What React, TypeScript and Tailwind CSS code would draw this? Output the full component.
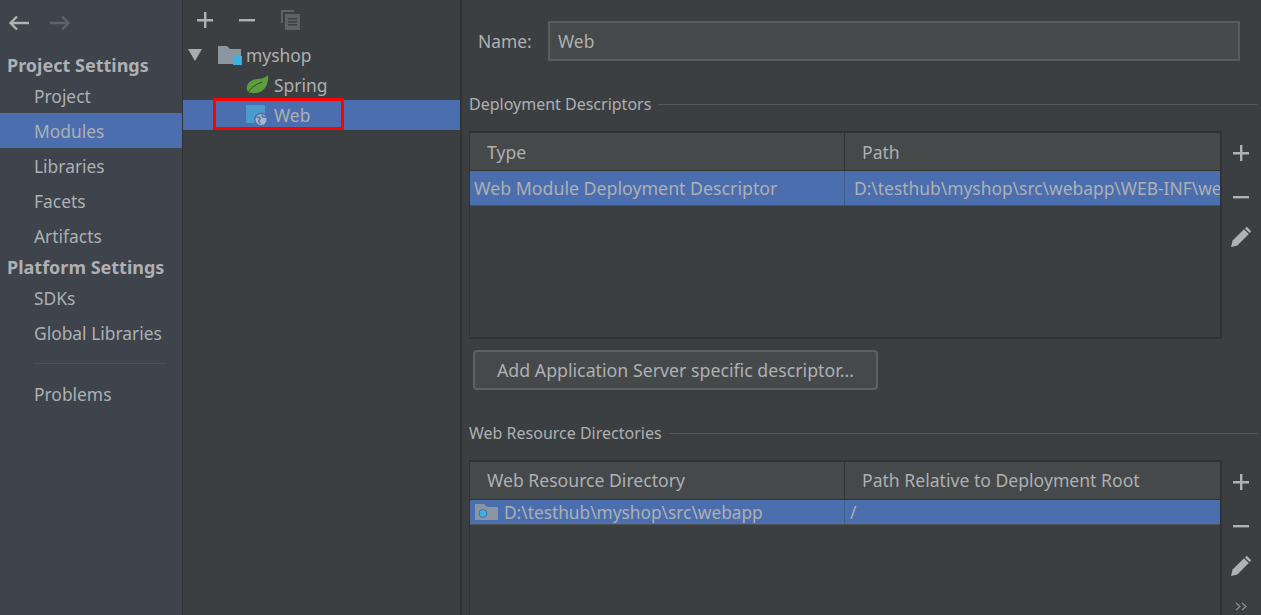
const font = "font-['Noto_Sans','Open_Sans',sans-serif]";

function Plus() {
  return (
    <svg width="16" height="16" viewBox="0 0 16 16" className="text-[#afb1b3]">
      <path d="M7 0h2.4v7H16v2.4H9.4V16H7V9.4H0V7h7z" fill="currentColor" />
    </svg>
  );
}

function Minus() {
  return (
    <svg width="16" height="16" viewBox="0 0 16 16" className="text-[#afb1b3]">
      <rect x="0" y="7" width="16" height="2.4" fill="currentColor" />
    </svg>
  );
}

function Pencil() {
  return (
    <svg width="22" height="22" viewBox="0 0 22 22" className="text-[#afb1b3]">
      <path d="M1 21l1.6-6.4L14 3.2l4.8 4.8L7.4 19.4z" fill="currentColor" />
      <path d="M15.6 1.8l1.2-1 4.4 4.4-1 1.4a1 1 0 0 1-1.2 0l-3.4-3.4a1 1 0 0 1 0-1.4z" fill="currentColor" />
    </svg>
  );
}

function SideTools({ more }: { more?: boolean }) {
  return (
    <div className="w-[39px] shrink-0 border-l-2 border-[#323232] flex flex-col items-center pt-[14px]">
      <Plus />
      <div className="mt-[28px]"><Minus /></div>
      <div className="mt-[21px]"><Pencil /></div>
      {more && (
        <svg width="12" height="9" viewBox="0 0 12 9" fill="none" stroke="#8c8e90" strokeWidth="1.3" className="mt-[25px]">
          <path d="M1 1l4 3.5L1 8M7 1l4 3.5L7 8" />
        </svg>
      )}
    </div>
  );
}

function SectionTitle({ text }: { text: string }) {
  return (
    <div className="flex items-center h-[24px] pl-[1px] pr-[3px] text-[16px] text-[#aeb0b2]">
      <span className="mr-[7px] whitespace-nowrap">{text}</span>
      <div className="flex-1 h-[1px] bg-[#55585a]" />
    </div>
  );
}

function SidebarItem({ text, active }: { text: string; active?: boolean }) {
  return (
    <div className={`h-[35px] pl-[34px] pt-[1px] flex items-center text-[17.4px] ${active ? "bg-[#4b6eaf]" : ""}`}>
      {text}
    </div>
  );
}

function Sidebar() {
  return (
    <div className="w-[182px] shrink-0 bg-[#3e434c] text-[#aeb0b2] border-r border-[#2f3133] box-content">
      <div className="h-[50px] flex items-start pt-[15px] pl-[8px] gap-[21px]">
        <svg width="21" height="16" viewBox="0 0 21 16" fill="none" stroke="#afb1b3" strokeWidth="2.4">
          <path d="M21 8H3M9 1.5L2.5 8 9 14.5" />
        </svg>
        <svg width="21" height="16" viewBox="0 0 21 16" fill="none" stroke="#5f6266" strokeWidth="2.4">
          <path d="M0 8h18M12 1.5L18.5 8 12 14.5" />
        </svg>
      </div>
      <div className="h-[31px] pl-[7px] flex items-center text-[18px] font-bold">Project Settings</div>
      <div className="h-[32px] pl-[34px] pb-[2px] flex items-center text-[17.4px]">Project</div>
      <SidebarItem text="Modules" active />
      <SidebarItem text="Libraries" />
      <SidebarItem text="Facets" />
      <SidebarItem text="Artifacts" />
      <div className="h-[27px] pl-[7px] pt-[1px] flex items-center text-[18px] font-bold">Platform Settings</div>
      <SidebarItem text="SDKs" />
      <SidebarItem text="Global Libraries" />
      <div className="mt-[13px] ml-[34px] mr-[16px] h-[1px] bg-[#4d5156]" />
      <div className="mt-[12px]"><SidebarItem text="Problems" /></div>
    </div>
  );
}

function TreePanel() {
  return (
    <div className="w-[277px] shrink-0 bg-[#3c3f41] text-[#aeb0b2] text-[17.4px] border-r-2 border-[#323232] box-content">
      <div className="h-[40px] flex items-center pl-[14px] gap-[26px]">
        <Plus />
        <Minus />
        <svg width="20" height="20" viewBox="0 0 20 20" fill="#5f6265">
          <path d="M0 0h13v2H2v11H0z" />
          <path d="M4 4h15v16H4zM7 8v1.6h9V8zm0 3v1.6h9V11zm0 3v1.6h9V14z" fillRule="evenodd" />
        </svg>
      </div>
      <div className="h-[30px] flex items-center pl-[5px]">
        <svg width="14" height="12" viewBox="0 0 14 12" fill="#a9abad"><path d="M0 0h14L7 12z" /></svg>
        <svg width="24" height="21" viewBox="0 0 24 21" className="ml-[16px]">
          <path d="M0 1h9l3 3h11v15H0z" fill="#8a97a3" />
          <rect x="15" y="11" width="9" height="9" fill="#3dafe0" />
        </svg>
        <span className="ml-[4px]">myshop</span>
      </div>
      <div className="h-[30px] flex items-center pl-[62px]">
        <svg width="24" height="20" viewBox="0 0 24 20">
          <path d="M23 0c1 8-3 17-12 18-3 .4-6 0-8-1C1 14 1 9 6 6c5-3 13-1 17-6z" fill="#5a9e3e" />
          <path d="M2 19C6 12 12 9 17 7" stroke="#3c3f41" strokeWidth="1" fill="none" />
        </svg>
        <span className="ml-[5px]">Spring</span>
      </div>
      <div className="relative h-[30px] flex items-center pl-[63px] bg-[#4b6eaf]">
        <svg width="22" height="21" viewBox="0 0 22 21">
          <rect x="0" y="0" width="19" height="18" fill="#4a9ccf" />
          <circle cx="15" cy="14.5" r="7" fill="#4b6eaf" />
          <circle cx="15" cy="14.5" r="5.5" fill="#a8b6cc" />
          <path d="M10.5 12.5c2-1 3.5 0 3.5 1.2s-1.2 1-1.2 2.2 1 2 1.4 3M16.5 9.5c-1 1 0 2.4 1 2.4s2.2 0 2.2 1.2" stroke="#4b6eaf" strokeWidth="1.5" fill="none" />
        </svg>
        <span className="ml-[6px]">Web</span>
        <div className="absolute left-[30px] top-[-2px] w-[131px] h-[32px] border-[3px] border-[#ff0000]" />
      </div>
    </div>
  );
}

function HeaderCell({ text, className }: { text: string; className: string }) {
  return <div className={`flex items-center text-[17.6px] text-[#aeb0b2] ${className}`}>{text}</div>;
}

function MainPanel() {
  return (
    <div className="flex-1 min-w-0 bg-[#3c3f41] text-[#aeb0b2] overflow-hidden pl-[6px]">
      <div className="h-[21px]" />
      <div className="flex items-center h-[40px] pl-[10px] pr-[21px] text-[17.4px]">
        <span className="w-[70px]">Name:</span>
        <div className="flex-1 h-[40px] flex items-center pl-[8px] bg-[#45494a] border-2 border-[#5a5d5f]">Web</div>
      </div>
      <div className="h-[31px]" />
      <SectionTitle text="Deployment Descriptors" />

      <div className="h-[15px]" />
      <div className="flex h-[208px] pl-[1px] pr-[2px]">
        <div className="flex-1 min-w-0 border-t-2 border-l border-b-2 border-[#323232] flex flex-col">
          <div className="flex h-[38px] bg-[#45494a] border-b border-[#323232]">
            <HeaderCell text="Type" className="w-[375px] pl-[17px] pt-[2px] border-r border-[#323232] shrink-0" />
            <HeaderCell text="Path" className="flex-1 pl-[17px] pt-[2px]" />
          </div>
          <div className="flex h-[35px] bg-[#4b6eaf] border-b border-[#4e5254] text-[17.75px] whitespace-nowrap overflow-hidden">
            <div className="w-[375px] pl-[4px] border-r border-[#3e5b91] shrink-0 flex items-center">Web Module Deployment Descriptor</div>
            <div className="flex-1 pl-[9px] overflow-hidden flex items-center text-[17.4px]">D:\testhub\myshop\src\webapp\WEB-INF\web.xml</div>
          </div>
        </div>
        <SideTools />
      </div>

      <div className="mt-[11px] ml-[5px] w-[405px] h-[40px] flex items-center pl-[22px] text-[17.75px] rounded-[4px] bg-[#45494a] border-2 border-[#5d6163]">
        Add Application Server specific descriptor...
      </div>
      <div className="h-[31px]" />
      <SectionTitle text="Web Resource Directories" />
      <div className="h-[15px]" />

      <div className="flex h-[170px] pl-[1px] pr-[2px]">
        <div className="flex-1 min-w-0 border-t-2 border-l border-[#323232] flex flex-col">
          <div className="flex h-[38px] bg-[#45494a] border-b border-[#323232]">
            <HeaderCell text="Web Resource Directory" className="w-[375px] pl-[17px] border-r border-[#323232] shrink-0" />
            <HeaderCell text="Path Relative to Deployment Root" className="flex-1 pl-[17px]" />
          </div>
          <div className="flex h-[25px] bg-[#4b6eaf] border-b border-[#4e5254] text-[17.3px] whitespace-nowrap">
            <div className="w-[375px] pl-[5px] border-r border-[#3e5b91] shrink-0 flex items-center">
              <svg width="23" height="16" viewBox="0 0 23 16">
                <path d="M0 0h9l3 3h11v13H0z" fill="#8a97a3" />
                <circle cx="8" cy="9.5" r="4" fill="#3dafe0" stroke="#4b6eaf" strokeWidth="1" />
              </svg>
              <span className="ml-[6px] pt-[2px]">D:\testhub\myshop\src\webapp</span>
            </div>
            <div className="flex-1 pl-[5px] pt-[2px] flex items-center">/</div>
          </div>
        </div>
        <SideTools more />
      </div>
    </div>
  );
}

export default function App() {
  return (
    <div className={`flex h-[615px] w-[1261px] overflow-hidden bg-[#3c3f41] ${font}`}>
      <Sidebar />
      <TreePanel />
      <MainPanel />
    </div>
  );
}
